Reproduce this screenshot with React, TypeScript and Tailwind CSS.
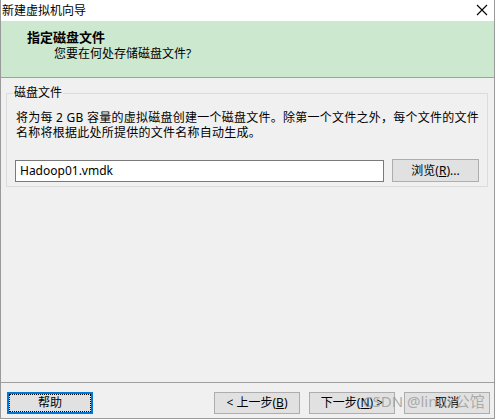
import React from "react";

const font = "font-['Noto_Sans','Noto_Sans_CJK_SC',sans-serif]";

const Btn = ({ children, focused = false }: { children: React.ReactNode; focused?: boolean }) => (
  <button
    className={
      "w-[86px] h-[22px] bg-[#e1e1e1] text-[12px] leading-none text-black flex items-stretch " +
      (focused ? "border-2 border-[#0078d7]" : "border border-[#adadad]")
    }
  >
    <span
      className={
        "flex-1 flex items-center justify-center " + (focused ? "border border-dotted border-black" : "")
      }
    >
      {children}
    </span>
  </button>
);

export default function App() {
  return (
    <div className={"w-[495px] h-[419px] bg-[#f0f0f0] border-x border-b border-[#9a9a9a] flex flex-col relative " + font}>
      {/* title bar */}
      <div className="h-[21px] bg-white flex items-center justify-between pl-[1px] pr-[6px] shrink-0">
        <span className="text-[12px] leading-none text-black">新建虚拟机向导</span>
        <svg width="12" height="12" viewBox="0 0 12 12" className="mb-[2px]">
          <path d="M1 1L11 11M11 1L1 11" stroke="#000" strokeWidth="1.1" />
        </svg>
      </div>

      {/* header */}
      <div className="h-[57px] bg-[#cce8cf] border-b border-[#a0a0a0] shrink-0 pt-[9px]">
        <div className="pl-[26px] text-[13px] font-bold leading-[14px] text-black">指定磁盘文件</div>
        <div className="pl-[53px] mt-[3px] text-[12px] leading-[14px] text-black">您要在何处存储磁盘文件?</div>
      </div>

      {/* body */}
      <div className="flex-1 pt-[7px] px-[5px] border-b border-[#a0a0a0]">
        <fieldset className="border border-[#dcdcdc] px-[8px] pb-[4px] w-[482px]">
          <legend className="ml-[-2px] px-[1px] text-[12px] leading-[16px] text-black">磁盘文件</legend>
          <p className="text-[12px] leading-[15px] text-black pl-[1px] mt-[9px] tracking-[0.25px]">
            将为每 2 GB 容量的虚拟磁盘创建一个磁盘文件。除第一个文件之外，每个文件的文件
            <br />
            名称将根据此处所提供的文件名称自动生成。
          </p>
          <div className="flex items-center gap-[8px] mt-[19px]">
            <div className="w-[369px] h-[22px] bg-white border border-[#7a7a7a] flex items-center px-[4px] text-[12px] text-black">
              Hadoop01.vmdk
            </div>
            <button className="w-[87px] h-[23px] bg-[#e1e1e1] border border-[#adadad] text-[12px] text-black">
              浏览(<span className="underline">R</span>)...
            </button>
          </div>
        </fieldset>
      </div>

      {/* buttons */}
      <div className="h-[35px] shrink-0 flex items-start pt-[9px] pl-[6px] pr-[4px]">
        <Btn focused>帮助</Btn>
        <div className="flex-1" />
        <div className="flex gap-[9px]">
          <Btn>
            &lt; 上一步(<span className="underline">B</span>)
          </Btn>
          <Btn>
            下一步(<span className="underline">N</span>) &gt;
          </Btn>
          <Btn>取消</Btn>
        </div>
      </div>

      {/* watermark */}
      <div className="absolute left-[362px] top-[394px] text-[15px] leading-none text-[#9a9a9a]/80 pointer-events-none whitespace-nowrap">
        CSDN @linux公馆
      </div>
    </div>
  );
}
